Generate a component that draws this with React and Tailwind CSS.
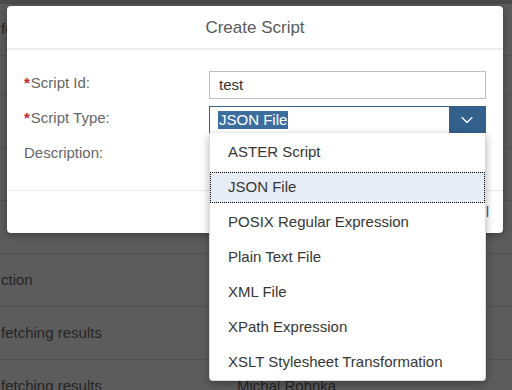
import React from "react";
import { ChevronDown } from "lucide-react";

const rows = [
  { h: "h-[52px]", text: "fetching results", owner: "" },
  { h: "h-[39px]", text: "", owner: "" },
  { h: "h-[53px]", text: "", owner: "" },
  { h: "h-[53px]", text: "", owner: "" },
  { h: "h-[53px]", text: "", owner: "" },
  { h: "h-[53px]", text: "ction", owner: "" },
  { h: "h-[53px]", text: "fetching results", owner: "" },
  { h: "h-[53px]", text: "fetching results", owner: "Michal Rohnka" },
];

const options = [
  "ASTER Script",
  "JSON File",
  "POSIX Regular Expression",
  "Plain Text File",
  "XML File",
  "XPath Expression",
  "XSLT Stylesheet Transformation",
];

function Label({ required, children }) {
  return (
    <div className="h-[28px] flex items-center pb-[3px] text-[15px] text-[#666666]">
      {required && <span className="text-[#c0262d] font-bold mr-[1px]">*</span>}
      {children}
    </div>
  );
}

export default function App() {
  return (
    <div className="relative w-[512px] h-[390px] overflow-hidden bg-[#5c5c5c] font-['Liberation_Sans',Arial,sans-serif]">
      {/* Page behind the overlay */}
      <div className="h-[4px] bg-[#4a4a4a]" />
      {rows.map((r, i) => (
        <div
          key={i}
          className={`${r.h} flex items-center border-b border-[#505050] text-[15px] text-[#252525]`}
        >
          <div className="w-[237px] shrink-0 whitespace-nowrap pl-[1px]">{r.text}</div>
          <div className="whitespace-nowrap">{r.owner}</div>
        </div>
      ))}

      {/* Dialog */}
      <div className="absolute left-[7px] top-[6px] w-[496px] bg-white rounded-[4px] shadow-[0_2px_8px_rgba(0,0,0,0.35)]">
        <div className="h-[44px] flex items-center justify-center pt-[1px] border-b-2 border-[#ececec] text-[17px] text-[#5a5a5a]">
          Create Script
        </div>

        <div className="grid grid-cols-[185px_1fr] gap-y-[7px] px-[17px] pt-[21px] pb-[21px]">
          <Label required>Script Id:</Label>
          <div className="h-[28px] border border-[#bfbfbf] flex items-center pl-[9px] text-[15px] text-[#333333]">
            test
          </div>

          <Label required>Script Type:</Label>
          <div className="relative h-[28px] border border-[#346187] flex items-stretch">
            <div className="flex-1 flex items-center pl-[8px] text-[15px]">
              <span className="bg-[#3c6d9f] text-white leading-[18px] px-[1px]">JSON File</span>
            </div>
            <div className="w-[36px] bg-[#33618c] flex items-center justify-center text-white">
              <ChevronDown size={20} strokeWidth={1.4} />
            </div>

            {/* Open list */}
            <div className="absolute left-[-1px] top-full w-[277px] z-10 pt-[2px] bg-white border border-[#dadada] border-t-0 rounded-b-[4px] shadow-[0_3px_8px_rgba(0,0,0,0.3)] text-[15px] text-[#363636]">
              {options.map((o) =>
                o === "JSON File" ? (
                  <div key={o} className="h-[35px] py-[2px]">
                    <div className="h-full flex items-center pl-[17px] bg-[#e7edf6] border border-dotted border-black">
                      {o}
                    </div>
                  </div>
                ) : (
                  <div key={o} className="h-[35px] flex items-center pl-[18px] whitespace-nowrap">
                    {o}
                  </div>
                )
              )}
            </div>
          </div>

          <Label>Description:</Label>
          <div className="h-[28px]" />
        </div>

        <div className="h-[43px] border-t border-[#e6e6e6] flex items-center justify-end pr-[14px] text-[15px] text-[#2f6497]">
          <span>Cancel</span>
        </div>
      </div>
    </div>
  );
}
